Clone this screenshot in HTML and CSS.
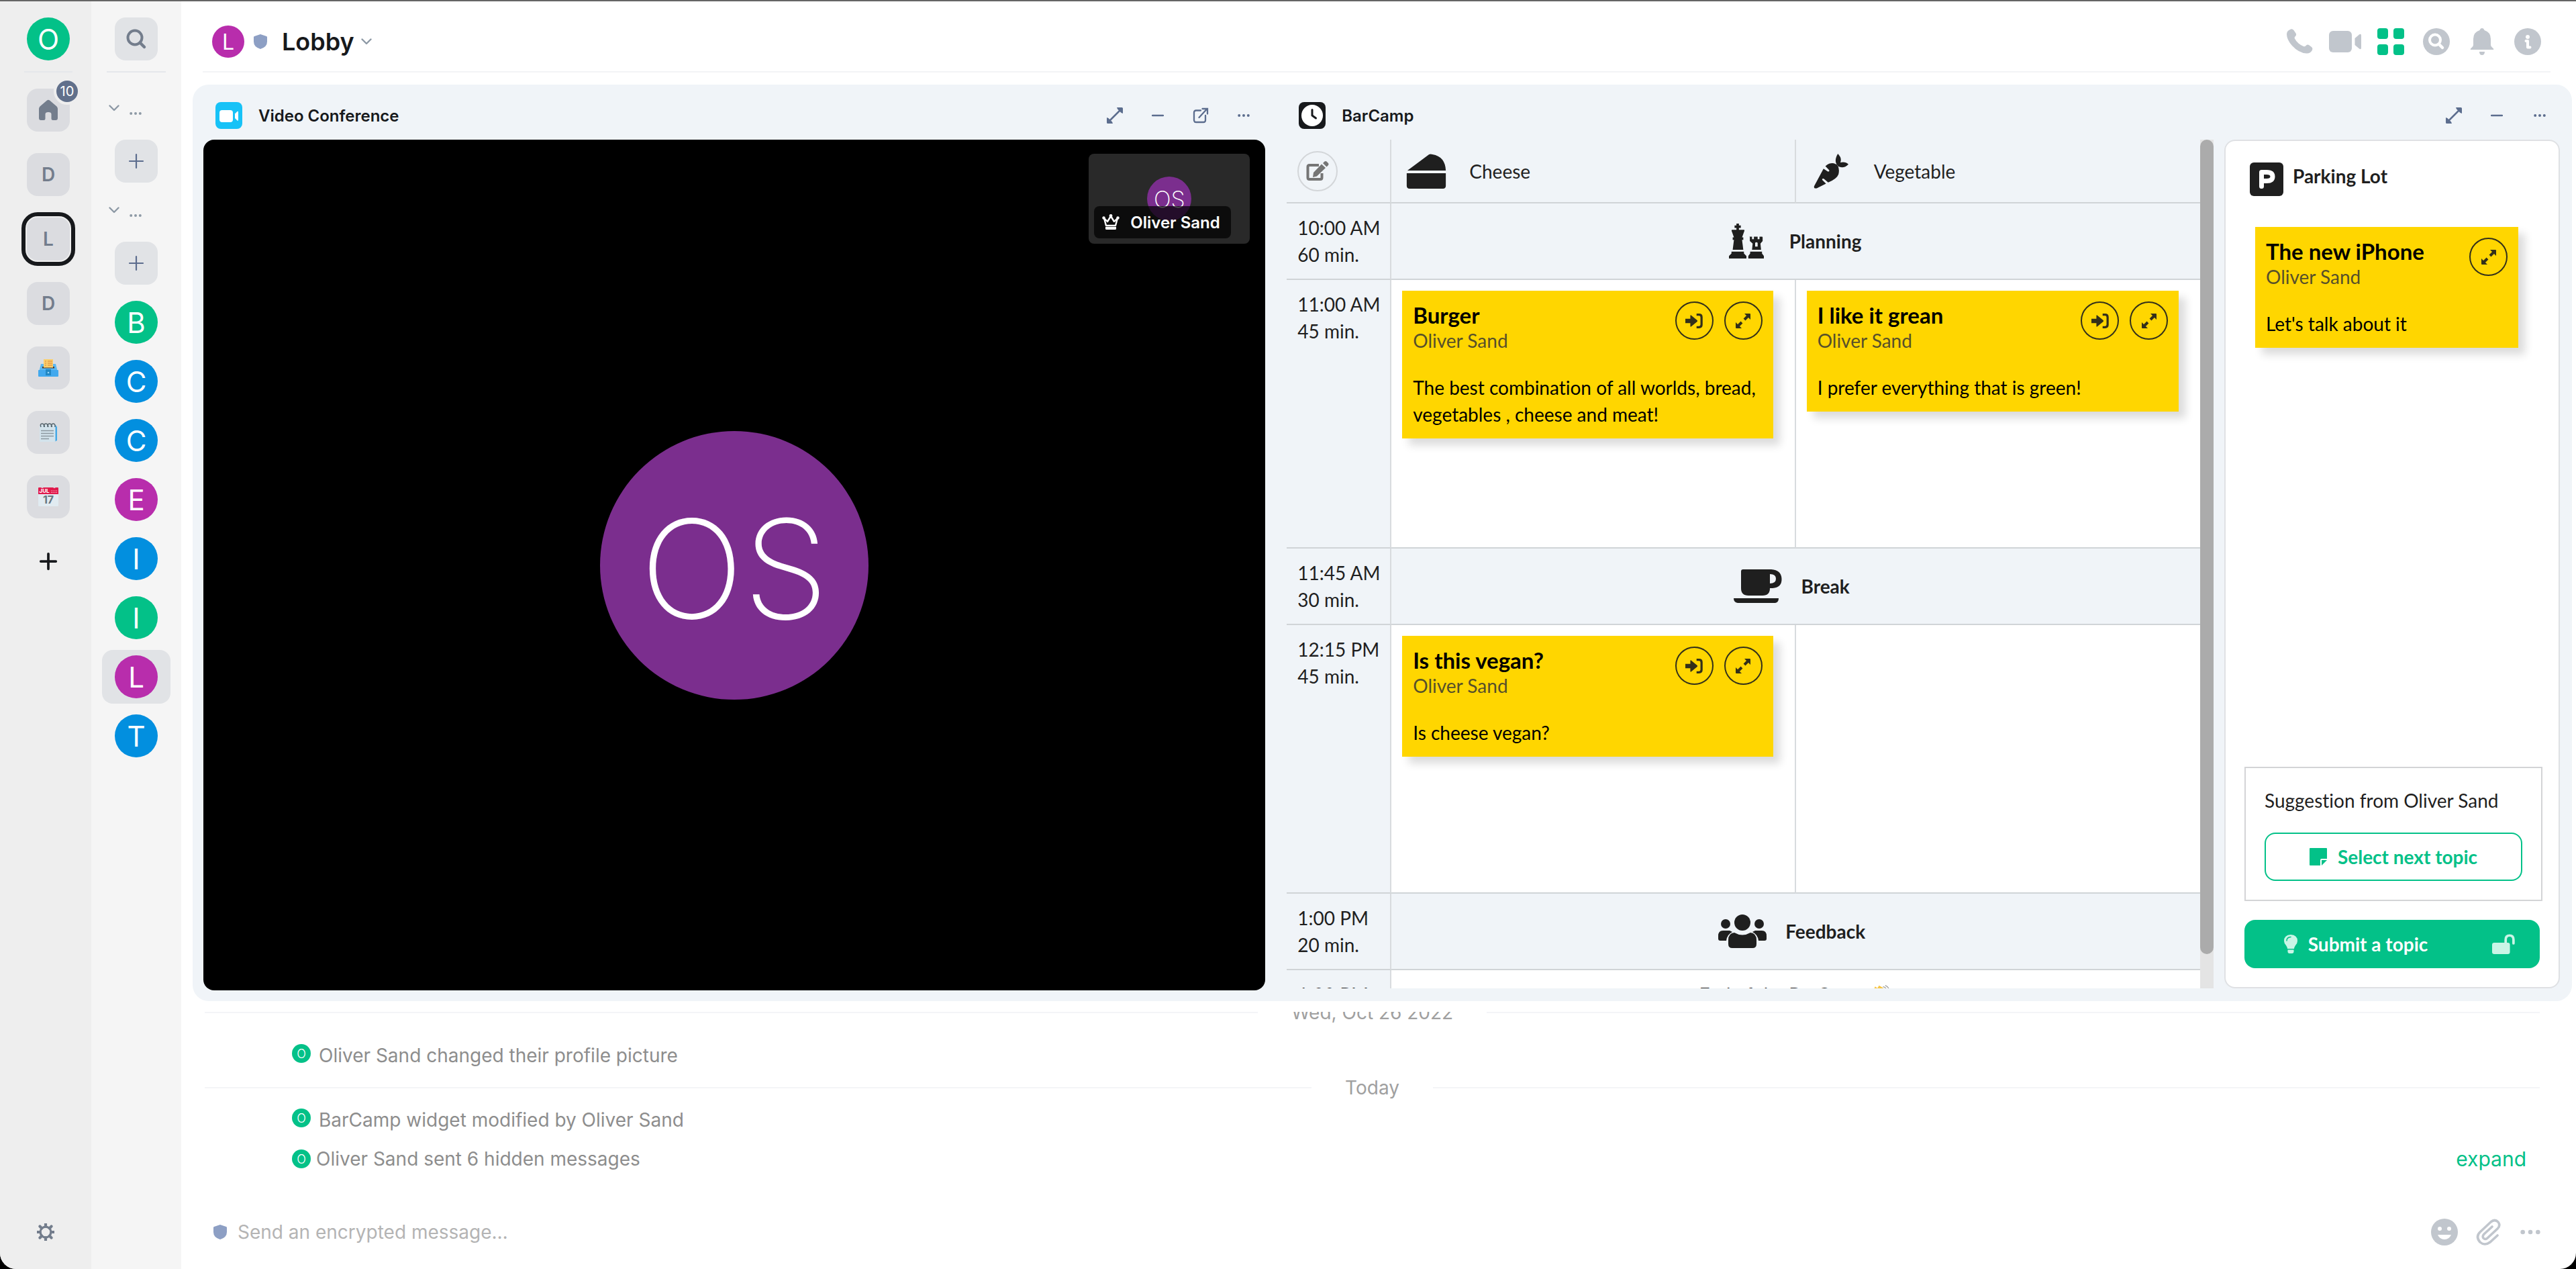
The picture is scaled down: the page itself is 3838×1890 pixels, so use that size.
FILE: index.html
```html
<!DOCTYPE html>
<html lang="en">
<head>
    <meta charset="UTF-8">
    <meta name="viewport" content="width=device-width, initial-scale=1.0">
    <title>Lobby</title>
    <link rel="stylesheet" href="styles.css">
</head>
<body>

<!-- icon sprite -->
<svg class="sprite" aria-hidden="true">
    <symbol id="i-search" viewBox="0 0 32 32"><circle cx="14" cy="14" r="10.5" fill="none" stroke="currentColor" stroke-width="4"/><path d="M21.5 21.5l6.5 6.5" stroke="currentColor" stroke-width="4.5" stroke-linecap="round"/></symbol>
    <symbol id="i-home" viewBox="0 0 32 32"><path d="M14 1.500q2-1.500 4 0L28.500 10.500q1.500 1.500 1.500 3.500V28q0 3-3 3h-4q-2.500 0-2.500-2.500V22q0-3-4.500-3t-4.500 3v6.500Q11.500 31 9 31H5q-3 0-3-3V14q0-2 1.500-3.500z" fill="currentColor"/></symbol>
    <symbol id="i-plus" viewBox="0 0 24 24"><path d="M12 2v20M2 12h20" stroke="currentColor" stroke-width="2.200" stroke-linecap="round"/></symbol>
    <symbol id="i-plus-bold" viewBox="0 0 24 24"><path d="M12 3v18M3 12h18" stroke="currentColor" stroke-width="3" stroke-linecap="round"/></symbol>
    <symbol id="i-chevron" viewBox="0 0 16 10"><path d="M1.500 1.500L8 8l6.500-6.500" fill="none" stroke="currentColor" stroke-width="2.400" stroke-linecap="round" stroke-linejoin="round"/></symbol>
    <symbol id="i-dots" viewBox="0 0 18 6"><circle cx="2.200" cy="3" r="2" fill="currentColor"/><circle cx="9" cy="3" r="2" fill="currentColor"/><circle cx="15.800" cy="3" r="2" fill="currentColor"/></symbol>
    <symbol id="i-gear" viewBox="0 0 28 28"><circle cx="14" cy="14" r="8.500" fill="none" stroke="currentColor" stroke-width="3.500"/><path d="M14 1v4M14 23v4M1 14h4M23 14h4M4.800 4.800l2.900 2.900M20.300 20.300l2.900 2.900M4.800 23.200l2.900-2.900M20.300 7.700l2.900-2.900" stroke="currentColor" stroke-width="4.500" stroke-linecap="round"/></symbol>
    <symbol id="i-shield" viewBox="0 0 20 22"><path d="M10 0l9 3q1 .3 1 1.500v6.500q0 8-10 11Q0 19 0 11V4.500Q0 3.300 1 3z" fill="currentColor"/></symbol>
    <symbol id="i-ballot" viewBox="0 0 30 30"><path d="M4 9h22l3 12H1z" fill="#5cb8f2"/><path d="M6 13h18v2.500H6z" fill="#4a3b30"/><path d="M8 2h14v12.500H8z" fill="#fbcf6b"/><path d="M10 5h2M14 5h7M10 8h2M14 8h7M10 11h2M14 11h7" stroke="#e0803a" stroke-width="1.200"/><rect x="0" y="18" width="30" height="10" rx="1" fill="#42a9ee"/><rect x="11" y="17" width="8" height="9" fill="#2288c4"/><circle cx="15" cy="22" r="1.300" fill="#9bd6f7"/></symbol>
    <symbol id="i-notes" viewBox="0 0 30 30"><path d="M6 4h20l2 3v20l-4 2H6z" fill="#45a9e6"/><rect x="2" y="4" width="23.500" height="25" rx="1" fill="#d3e3ec"/><path d="M4 12.500h19M4 16.500h19M4 20.500h19M4 24.500h12" stroke="#8b979e" stroke-width="1.300"/><path d="M4 7q-2-5 2-5 3 0 2.500 5M9.500 7q-2-5 2-5 3 0 2.500 5M15 7q-2-5 2-5 3 0 2.500 5M20.500 7q-2-5 2-5 3 0 2.500 5" fill="none" stroke="#52626b" stroke-width="1.500"/></symbol>
    <symbol id="i-calendar" viewBox="0 0 30 30"><rect x="0" y="1" width="30" height="28" rx="1.500" fill="#e1ebf1"/><path d="M0 11V2q0-1 1-1h3l2 1 2-1h14l2 1 2-1h3q1 0 1 1v9z" fill="#e01a4c"/><text x="1.500" y="9" class="cal-month">JUL</text><path d="M19 6h9M19 8.500h9" stroke="#f7a5b8" stroke-dasharray="1.500 1"/><text x="15" y="25" class="cal-day">17</text></symbol>

    <symbol id="i-phone" viewBox="0 0 40 40"><path d="M6 2q3-2 5.500 1l3 4.500q1.500 2.500-.5 4.500-2 1.500-1 3.500 2 4 5.500 7t7.500 4.500q2 .8 3.500-1 2-2.500 4.500-1l4 3q2.500 2 .5 5.500-3 4.500-8 4Q19 37 9 26 1 17 1 9q0-5 5-7z" fill="currentColor"/></symbol>
    <symbol id="i-video" viewBox="0 0 48 32"><rect width="34" height="32" rx="6" fill="currentColor"/><path d="M38.500 11l6.500-5.500q3-2 3 1.500v18q0 3.500-3 1.500L38.500 21z" fill="currentColor"/></symbol>
    <symbol id="i-grid" viewBox="0 0 40 40"><g fill="currentColor"><rect width="16" height="16" rx="4"/><rect x="24" width="16" height="16" rx="4"/><rect y="24" width="16" height="16" rx="4"/><rect x="24" y="24" width="16" height="16" rx="4"/></g></symbol>
    <symbol id="i-find" viewBox="0 0 40 40"><circle cx="20" cy="20" r="20" fill="currentColor"/><circle cx="18" cy="17.500" r="8" fill="none" stroke="#fff" stroke-width="4"/><path d="M24 24l5 5" stroke="#fff" stroke-width="4.500" stroke-linecap="round"/></symbol>
    <symbol id="i-bell" viewBox="0 0 40 40"><path d="M20 0q2.500 0 3.500 3Q33 6 33 16v9q0 2 2.500 4t1.500 3H3q-1-1 1.500-3T7 25v-9Q7 6 16.500 3 17.500 0 20 0zM16 35h8q0 5-4 5t-4-5z" fill="currentColor"/></symbol>
    <symbol id="i-info" viewBox="0 0 40 40"><circle cx="20" cy="20" r="20" fill="currentColor"/><circle cx="20" cy="13" r="3" fill="#fff"/><path d="M17.500 19H20v9.500h3.500" fill="none" stroke="#fff" stroke-width="4" stroke-linecap="round" stroke-linejoin="round"/></symbol>

    <symbol id="i-expand" viewBox="0 0 24 24"><path d="M4 20L20 4" stroke="currentColor" stroke-width="2.500"/><path d="M15 0h7.500Q24 0 24 1.500V9l-2.500-1L16 2.500zM9 24H1.500Q0 24 0 22.500V15l2.500 1L8 21.500z" fill="currentColor"/></symbol>
    <symbol id="i-minus" viewBox="0 0 18 4"><path d="M1 2h16" stroke="currentColor" stroke-width="2.400" stroke-linecap="round"/></symbol>
    <symbol id="i-popout" viewBox="0 0 24 24"><path d="M12 4.500H5Q2 4.500 2 7.500V19q0 3 3 3h11q3 0 3-3v-7M9.500 15L21 2.500M14.500 2H22v7.500" fill="none" stroke="currentColor" stroke-width="2.300" stroke-linecap="round"/></symbol>
    <symbol id="i-camera" viewBox="0 0 40 40"><rect width="40" height="40" rx="8" fill="#17c2f7"/><rect x="6" y="12" width="20" height="18" rx="4" fill="#fff"/><path d="M29 17.500l3.500-3.500q1.500-1 1.500 1v11.500q0 2-1.500 1L29 24z" fill="#fff"/></symbol>
    <symbol id="i-clock" viewBox="0 0 40 40"><rect width="40" height="40" rx="8" fill="#17191c"/><circle cx="20" cy="20" r="16" fill="#fff"/><path d="M20 11.500V20l5.500 4" fill="none" stroke="#17191c" stroke-width="3" stroke-linecap="round" stroke-linejoin="round"/></symbol>
    <symbol id="i-crown" viewBox="0 0 26 24"><path d="M3 6l3 11h14l3-11-5 5-5-8-5 8z" fill="none" stroke="currentColor" stroke-width="2.400" stroke-linejoin="round"/><path d="M5 19h16v2.500q0 1.500-1.500 1.500h-13Q5 23 5 21.500z" fill="currentColor"/><circle cx="13" cy="2.400" r="2.400" fill="currentColor"/><circle cx="2.500" cy="5.500" r="2.200" fill="currentColor"/><circle cx="23.500" cy="5.500" r="2.200" fill="currentColor"/></symbol>

    <symbol id="i-edit" viewBox="0 0 34 30"><path d="M19 6H5Q2.500 6 2.500 8.500v16Q2.500 27 5 27h16q2.500 0 2.500-2.500V18" fill="none" stroke="currentColor" stroke-width="4"/><path d="M23 4.500l6 5.500-13 12.500-6 1.500 1-7zM25 3l2.500-2.500q1.500-1 3 0L33 3q1 1.500 0 3l-2.500 2.500z" fill="currentColor"/></symbol>
    <symbol id="i-cheese" viewBox="0 0 56 50"><path d="M32 1Q34 0 37 1q18 3 19 23H1z" fill="currentColor"/><path d="M0 28h56v18q0 4-4 4H4q-4 0-4-4z" fill="currentColor"/></symbol>
    <symbol id="i-carrot" viewBox="0 0 56 56"><path d="M39 19q-6-6-14-3-3 1-6 4l6 6q1 3-2 2.500L16 24 1 52q-1 4 4 3.500L20 48l-6-6q-.5-3 2.500-2l7 6q14-6 16.500-13 2-8-1-14zM37 17q-4-7 2-17 7 7 4 14 8-2 13 3-8 8-17 3z" fill="currentColor"/></symbol>
    <symbol id="i-chess" viewBox="0 0 56 56"><path d="M12 0h4v3h3v4h-3v3h8q1 0 .8 1.500L21 22h2v4h-2l2 16H6l2-16H6v-4h2L4.200 11.500Q4 10 5 10h7V7H9V3h3zM4 45h20v3l4 4v4H0v-4l4-4zM33 21h4v4h3v-4h6v4h3v-4h4q1 0 1 1v6l-3.500 4 1 10H37l1-10-4.500-4v-6q-.5-1-.5-1zM42 31v6h4v-6q-2-2-4 0zM34 45h19v3l3 4v4H31v-4l3-4z" fill="currentColor" fill-rule="evenodd"/></symbol>
    <symbol id="i-cup" viewBox="0 0 72 50"><path d="M14 0h42q15 1 15.500 14T58 28h-4q0 11-11 11H22q-11 0-11-11V3q0-3 3-3zm40 7v14q9 0 9-7t-9-7zM0 43h67q0 6-5 7H6q-6-1-6-7z" fill="currentColor" fill-rule="evenodd"/></symbol>
    <symbol id="i-people" viewBox="0 0 72 50"><g fill="currentColor"><circle cx="36" cy="12" r="12"/><circle cx="11" cy="14" r="7"/><circle cx="61" cy="14" r="7"/><path d="M24 27q12 7 24 0 9 1 9 11v6q0 6-6 6H21q-6 0-6-6v-6q0-10 9-11zM7 24h10l4 2q-8 4-9 13H3q-3 0-3-3v-4q0-8 7-8zM65 24H55l-4 2q8 4 9 13h9q3 0 3-3v-4q0-8-7-8z"/></g></symbol>
    <symbol id="i-wave" viewBox="0 0 36 36"><path d="M4 10l3-6 4 3 3-5 5 3 3 2 9 16-8 10H13L3 20z" fill="#f7c544"/><path d="M21 4q6 2 8 8M25 2q5 2 7 7" fill="none" stroke="#9a9a9a" stroke-width="1.500"/></symbol>
    <symbol id="i-enter" viewBox="0 0 28 24"><path d="M0 8.500h8V4q0-2 1.500-1L19 11q1 1 0 2l-9.500 8Q8 22 8 20v-4.500H0z" fill="currentColor"/><path d="M18 2h4q4 0 4 4v12q0 4-4 4h-4" fill="none" stroke="currentColor" stroke-width="3.500"/></symbol>
    <symbol id="i-resize" viewBox="0 0 24 24"><path d="M3.500 20.500L10 14M14 10l6.500-6.500" stroke="currentColor" stroke-width="4"/><path d="M14 1h8q1 0 1 1v8zM10 23H2q-1 0-1-1v-8z" fill="currentColor"/></symbol>
    <symbol id="i-parking" viewBox="0 0 50 50"><rect width="50" height="50" rx="6" fill="currentColor"/><path d="M17.500 35.500v-21H25q9 0 9 6.500t-9 6.500h-7" fill="none" stroke="#fff" stroke-width="7" stroke-linejoin="round" stroke-linecap="round"/></symbol>
    <symbol id="i-note" viewBox="0 0 26 26"><path d="M1 0h24q1 0 1 1v15h-8q-2 0-2 2v8H1q-1 0-1-1V1q0-1 1-1zM18 18h8l-8 8z" fill="currentColor"/></symbol>
    <symbol id="i-bulb" viewBox="0 0 20 28"><path d="M10 0q10 .5 10 9.500 0 3.500-3 6.500-2 3-2 5H5q0-2-2-5-3-3-3-6.500Q0 .5 10 0zM5.500 22.500h9V26q-.5 2-2.500 2H8q-2 0-2.500-2z" fill="currentColor"/><path d="M4 9q0-5 6-5.500" fill="none" stroke="#03c188" stroke-width="1.500" stroke-linecap="round"/></symbol>
    <symbol id="i-unlock" viewBox="0 0 32 28"><rect y="12" width="25" height="16" rx="3" fill="currentColor"/><path d="M19 13V8q0-6 5.500-6T30 8v5" fill="none" stroke="currentColor" stroke-width="3.500" stroke-linecap="round"/></symbol>
    <symbol id="i-smile" viewBox="0 0 40 40"><circle cx="20" cy="20" r="20" fill="currentColor"/><circle cx="13" cy="15" r="3" fill="#fff"/><circle cx="27" cy="15" r="3" fill="#fff"/><path d="M10 24h20q-3 7-10 7t-10-7z" fill="#fff"/></symbol>
    <symbol id="i-clip" viewBox="0 0 38 40"><path d="M32 25L21 35q-8 6-15 0-7-8 0-15L22 5q6-5 11 0 4 5-1 10L17 29q-3 3-6 0-2-3 1-6l12-11" fill="none" stroke="currentColor" stroke-width="3.600" stroke-linecap="round"/></symbol>
</svg>

<div class="app">

    <nav class="spaces" aria-label="Spaces">
        <button class="avatar avatar-lg green" type="button">O</button>
        <hr class="nav-line">
        <div class="space-list">
            <button class="tile" type="button" aria-label="Home"><svg class="icon-32"><use href="#i-home"/></svg><span class="badge">10</span></button>
            <button class="tile" type="button">D</button>
            <button class="tile tile-active" type="button">L</button>
            <button class="tile" type="button">D</button>
            <button class="tile" type="button" aria-label="Ballot"><svg class="icon-30"><use href="#i-ballot"/></svg></button>
            <button class="tile" type="button" aria-label="Notes"><svg class="icon-30"><use href="#i-notes"/></svg></button>
            <button class="tile" type="button" aria-label="Calendar"><svg class="icon-30"><use href="#i-calendar"/></svg></button>
            <button class="tile tile-plain" type="button" aria-label="Add space"><svg class="icon-30"><use href="#i-plus-bold"/></svg></button>
        </div>
        <button class="settings" type="button" aria-label="Settings"><svg class="icon-26"><use href="#i-gear"/></svg></button>
    </nav>

    <aside class="rooms" aria-label="Rooms">
        <button class="tile tile-light" type="button" aria-label="Search"><svg class="icon-32"><use href="#i-search"/></svg></button>
        <hr class="nav-line">
        <div class="sublist sublist-first"><svg class="chevron"><use href="#i-chevron"/></svg><svg class="sub-dots"><use href="#i-dots"/></svg></div>
        <button class="tile tile-light slate" type="button" aria-label="Start chat"><svg class="icon-24"><use href="#i-plus"/></svg></button>
        <div class="sublist"><svg class="chevron"><use href="#i-chevron"/></svg><svg class="sub-dots"><use href="#i-dots"/></svg></div>
        <button class="tile tile-light slate" type="button" aria-label="Add room"><svg class="icon-24"><use href="#i-plus"/></svg></button>
        <div class="room-list">
            <a class="room" href="#"><span class="avatar avatar-lg green">B</span></a>
            <a class="room" href="#"><span class="avatar avatar-lg blue">C</span></a>
            <a class="room" href="#"><span class="avatar avatar-lg blue">C</span></a>
            <a class="room" href="#"><span class="avatar avatar-lg purple">E</span></a>
            <a class="room" href="#"><span class="avatar avatar-lg blue">I</span></a>
            <a class="room" href="#"><span class="avatar avatar-lg green">I</span></a>
            <a class="room room-active" href="#"><span class="avatar avatar-lg purple">L</span></a>
            <a class="room" href="#"><span class="avatar avatar-lg blue">T</span></a>
        </div>
    </aside>

    <main class="main">
        <header class="room-header">
            <span class="avatar avatar-md purple">L</span>
            <svg class="shield"><use href="#i-shield"/></svg>
            <h1>Lobby</h1>
            <svg class="chevron"><use href="#i-chevron"/></svg>
            <div class="header-actions">
                <button type="button" aria-label="Voice call"><svg class="icon-40"><use href="#i-phone"/></svg></button>
                <button type="button" aria-label="Video call"><svg class="icon-video"><use href="#i-video"/></svg></button>
                <button class="on" type="button" aria-label="Widgets"><svg class="icon-40"><use href="#i-grid"/></svg></button>
                <button type="button" aria-label="Search"><svg class="icon-40"><use href="#i-find"/></svg></button>
                <button type="button" aria-label="Notifications"><svg class="icon-40"><use href="#i-bell"/></svg></button>
                <button type="button" aria-label="Room info"><svg class="icon-40"><use href="#i-info"/></svg></button>
            </div>
        </header>

        <section class="widgets">
            <article class="widget">
                <header class="widget-header">
                    <svg class="icon-40"><use href="#i-camera"/></svg>
                    <h2>Video Conference</h2>
                    <button type="button" aria-label="Maximise"><svg class="icon-24"><use href="#i-expand"/></svg></button>
                    <button type="button" aria-label="Minimise"><svg class="icon-minus"><use href="#i-minus"/></svg></button>
                    <button type="button" aria-label="Pop out"><svg class="icon-24"><use href="#i-popout"/></svg></button>
                    <button type="button" aria-label="Options"><svg class="sub-dots"><use href="#i-dots"/></svg></button>
                </header>
                <div class="video">
                    <div class="speaker">OS</div>
                    <div class="thumb">
                        <div class="thumb-avatar">OS</div>
                        <div class="thumb-label"><svg class="icon-26"><use href="#i-crown"/></svg>Oliver Sand</div>
                    </div>
                </div>
            </article>

            <article class="widget">
                <header class="widget-header">
                    <svg class="icon-40"><use href="#i-clock"/></svg>
                    <h2>BarCamp</h2>
                    <button type="button" aria-label="Maximise"><svg class="icon-24"><use href="#i-expand"/></svg></button>
                    <button type="button" aria-label="Minimise"><svg class="icon-minus"><use href="#i-minus"/></svg></button>
                    <button type="button" aria-label="Options"><svg class="sub-dots"><use href="#i-dots"/></svg></button>
                </header>
                <div class="barcamp">
                    <div class="schedule">
                        <table>
                            <thead>
                                <tr>
                                    <th class="time-col"><button class="edit" type="button" aria-label="Edit"><svg class="icon-34"><use href="#i-edit"/></svg></button></th>
                                    <th><div class="track"><svg class="track-icon"><use href="#i-cheese"/></svg>Cheese</div></th>
                                    <th><div class="track"><svg class="track-icon"><use href="#i-carrot"/></svg>Vegetable</div></th>
                                </tr>
                            </thead>
                            <tbody>
                                <tr class="band">
                                    <th>10:00 AM<br>60 min.</th>
                                    <td colspan="2"><div class="band-title"><svg class="track-icon"><use href="#i-chess"/></svg>Planning</div></td>
                                </tr>
                                <tr class="slot">
                                    <th>11:00 AM<br>45 min.</th>
                                    <td>
                                        <div class="card">
                                            <div class="card-head">
                                                <h3>Burger</h3>
                                                <button type="button" aria-label="Move"><svg class="icon-26"><use href="#i-enter"/></svg></button>
                                                <button type="button" aria-label="Open"><svg class="icon-24"><use href="#i-resize"/></svg></button>
                                            </div>
                                            <div class="author">Oliver Sand</div>
                                            <p>The best combination of all worlds, bread, vegetables , cheese and meat!</p>
                                        </div>
                                    </td>
                                    <td>
                                        <div class="card">
                                            <div class="card-head">
                                                <h3>I like it grean</h3>
                                                <button type="button" aria-label="Move"><svg class="icon-26"><use href="#i-enter"/></svg></button>
                                                <button type="button" aria-label="Open"><svg class="icon-24"><use href="#i-resize"/></svg></button>
                                            </div>
                                            <div class="author">Oliver Sand</div>
                                            <p>I prefer everything that is green!</p>
                                        </div>
                                    </td>
                                </tr>
                                <tr class="band">
                                    <th>11:45 AM<br>30 min.</th>
                                    <td colspan="2"><div class="band-title"><svg class="track-icon"><use href="#i-cup"/></svg>Break</div></td>
                                </tr>
                                <tr class="slot">
                                    <th>12:15 PM<br>45 min.</th>
                                    <td>
                                        <div class="card">
                                            <div class="card-head">
                                                <h3>Is this vegan?</h3>
                                                <button type="button" aria-label="Move"><svg class="icon-26"><use href="#i-enter"/></svg></button>
                                                <button type="button" aria-label="Open"><svg class="icon-24"><use href="#i-resize"/></svg></button>
                                            </div>
                                            <div class="author">Oliver Sand</div>
                                            <p>Is cheese vegan?</p>
                                        </div>
                                    </td>
                                    <td></td>
                                </tr>
                                <tr class="band">
                                    <th>1:00 PM<br>20 min.</th>
                                    <td colspan="2"><div class="band-title"><svg class="track-icon"><use href="#i-people"/></svg>Feedback</div></td>
                                </tr>
                                <tr class="closing">
                                    <th>1:20 PM</th>
                                    <td colspan="2">End of the BarCamp <svg class="icon-34"><use href="#i-wave"/></svg></td>
                                </tr>
                            </tbody>
                        </table>
                    </div>
                    <div class="scrollbar"><div class="scrollbar-thumb"></div></div>
                    <div class="parking">
                        <h3 class="parking-title"><svg class="icon-50"><use href="#i-parking"/></svg>Parking Lot</h3>
                        <div class="parking-list">
                            <div class="card">
                                <div class="card-head">
                                    <h3>The new iPhone</h3>
                                    <button type="button" aria-label="Open"><svg class="icon-24"><use href="#i-resize"/></svg></button>
                                </div>
                                <div class="author">Oliver Sand</div>
                                <p>Let's talk about it</p>
                            </div>
                        </div>
                        <div class="suggestion">
                            <p>Suggestion from Oliver Sand</p>
                            <button class="btn btn-outline" type="button"><svg class="icon-26"><use href="#i-note"/></svg>Select next topic</button>
                        </div>
                        <div class="submit-row">
                            <button class="btn btn-submit" type="button"><svg class="icon-bulb"><use href="#i-bulb"/></svg>Submit a topic</button>
                            <button class="btn btn-lock" type="button" aria-label="Lock topics"><svg class="icon-34"><use href="#i-unlock"/></svg></button>
                        </div>
                    </div>
                </div>
            </article>
        </section>

        <section class="timeline">
            <div class="date">Wed, Oct 26 2022</div>
            <div class="event event-gap"><span class="avatar avatar-sm green">O</span>Oliver Sand changed their profile picture</div>
            <div class="date">Today</div>
            <div class="event"><span class="avatar avatar-sm green">O</span>BarCamp widget modified by Oliver Sand</div>
            <div class="event summary"><span class="avatar avatar-sm green">O</span>Oliver Sand sent 6 hidden messages<button class="expand" type="button">expand</button></div>
        </section>

        <form class="composer">
            <svg class="shield"><use href="#i-shield"/></svg>
            <input type="text" placeholder="Send an encrypted message…" aria-label="Send an encrypted message">
            <button type="button" aria-label="Emoji"><svg class="icon-40"><use href="#i-smile"/></svg></button>
            <button type="button" aria-label="Attachment"><svg class="icon-40"><use href="#i-clip"/></svg></button>
            <button type="button" aria-label="More options"><svg class="more-dots"><use href="#i-dots"/></svg></button>
        </form>
    </main>

</div>

</body>
</html>
```
FILE: styles.css
```css
* {
    box-sizing: border-box;
}
html {
    background: #000;
}
body {
    margin: 0;
    font-family: Inter, "Liberation Sans", sans-serif;
    font-size: 28px;
    color: #17191c;
}
h1, h2, h3, p {
    margin: 0;
}
button {
    padding: 0;
    border: none;
    background: none;
    font: inherit;
    color: inherit;
    cursor: pointer;
}
svg {
    display: block;
    flex: none;
}
.sprite {
    position: absolute;
    width: 0;
    height: 0;
}
.cal-month {
    font: bold 8px Inter, sans-serif;
    fill: #fff;
}
.cal-day {
    font: bold 16px Inter, sans-serif;
    fill: #66757f;
    text-anchor: middle;
}

/* icon sizes */
.icon-24 { width: 24px; height: 24px; }
.icon-26 { width: 26px; height: 26px; }
.icon-30 { width: 30px; height: 30px; }
.icon-32 { width: 32px; height: 32px; }
.icon-34 { width: 34px; height: 30px; }
.icon-40 { width: 40px; height: 40px; }
.icon-50 { width: 50px; height: 50px; }
.icon-minus { width: 18px; height: 4px; }
.icon-video { width: 48px; height: 32px; }
.icon-bulb { width: 20px; height: 28px; }
.sub-dots { width: 18px; height: 6px; }
.more-dots { width: 32px; height: 10px; }
.chevron { width: 16px; height: 10px; color: #8d99a5; }
.shield { width: 20px; height: 22px; color: #8d9fc4; }

.app {
    display: flex;
    height: 100vh;
    border-top: 2px solid #666;
    border-radius: 0 0 24px 24px;
    overflow: hidden;
    background: #fff;
}

/* avatars */
.avatar {
    display: flex;
    flex: none;
    align-items: center;
    justify-content: center;
    border-radius: 50%;
    color: #fff;
}
.avatar-lg {
    width: 64px;
    height: 64px;
    font-size: 42px;
}
.avatar-md {
    width: 48px;
    height: 48px;
    font-size: 32px;
}
.avatar-sm {
    width: 28px;
    height: 28px;
    font-size: 18px;
    font-weight: 300;
}
.green { background: #03c188; }
.blue { background: #028fdf; }
.purple { background: #b82dac; }

/* left columns */
.spaces, .rooms {
    display: flex;
    flex: none;
    flex-direction: column;
    align-items: center;
    padding-top: 24px;
}
.spaces {
    width: 136px;
    padding-left: 8px;
    background: #eeeeee;
}
.rooms {
    width: 134px;
    background: #f5f5f5;
}
.nav-line {
    width: 88px;
    height: 2px;
    margin: 16px 0 0;
    border: none;
    background: #e5e7eb;
}
.spaces .nav-line {
    width: 72px;
}
.space-list {
    display: flex;
    flex-direction: column;
    gap: 32px;
    margin-top: 24px;
}
.tile {
    position: relative;
    display: flex;
    align-items: center;
    justify-content: center;
    width: 64px;
    height: 64px;
    border-radius: 16px;
    background: #dbdce0;
    color: #737d8c;
    font-weight: 600;
}
.tile-light {
    background: #e1e3e6;
}
.tile-plain {
    background: none;
    color: #17191c;
}
.slate {
    color: #5c6d8e;
}
.tile-active {
    outline: 6px solid #17191c;
    outline-offset: 2px;
}
.badge {
    position: absolute;
    top: -16px;
    right: -16px;
    width: 40px;
    height: 40px;
    border: 4px solid #eeeeee;
    border-radius: 50%;
    background: #61708b;
    color: #fff;
    font-size: 20px;
    font-weight: 400;
    line-height: 32px;
}
.settings {
    margin: auto 8px 42px 0;
    color: #737d8c;
}
.sublist {
    display: flex;
    gap: 15px;
    width: 100%;
    height: 32px;
    margin: 28px 0;
    padding: 8px 0 0 26px;
    color: #8d99a5;
}
.sublist-first {
    margin-top: 40px;
}
.sublist .sub-dots {
    margin-top: 10px;
}
.room-list {
    display: flex;
    flex-direction: column;
    gap: 8px;
    width: 100%;
    padding: 16px;
}
.room {
    display: flex;
    justify-content: center;
    padding: 8px;
    border-radius: 16px;
    text-decoration: none;
}
.room-active {
    background: #e1e3e6;
}

/* room header */
.main {
    display: flex;
    flex: 1;
    flex-direction: column;
    min-width: 0;
}
.room-header {
    display: flex;
    flex: none;
    align-items: center;
    height: 106px;
    margin: 0 38px 18px 32px;
    padding: 16px 14px 0;
    border-bottom: 2px solid #f3f4f6;
}
.room-header .shield {
    margin: 0 22px 0 14px;
}
.room-header h1 {
    margin-right: 10px;
    font-size: 36px;
    font-weight: 600;
}
.header-actions {
    display: flex;
    gap: 28px;
    margin-left: auto;
    color: #c1c6cd;
}
.header-actions button {
    display: flex;
    align-items: center;
    justify-content: center;
    width: 40px;
    height: 40px;
}
.header-actions .on {
    color: #03c188;
}

/* widgets */
.widgets {
    display: grid;
    flex: 5 1 0;
    grid-template-rows: minmax(0, 1fr);
    grid-template-columns: 5fr 6fr;
    gap: 32px;
    min-height: 0;
    margin: 0 6px 0 17px;
    padding: 0 16px;
    border-radius: 24px;
    background: #f0f4f8;
}
.widget {
    display: flex;
    flex-direction: column;
    min-width: 0;
    padding: 10px 0 16px;
}
.widget-header {
    display: flex;
    flex: none;
    align-items: center;
    height: 72px;
    padding-left: 18px;
}
.widget-header h2 {
    flex: 1;
    margin-left: 24px;
    font-size: 24px;
    font-weight: 600;
}
.widget-header button {
    display: flex;
    align-items: center;
    justify-content: center;
    width: 64px;
    height: 64px;
    color: #5c6d8e;
}
.video {
    position: relative;
    display: flex;
    flex: 1;
    align-items: center;
    justify-content: center;
    border-radius: 16px;
    background: #000;
}
.speaker {
    width: 400px;
    height: 400px;
    border-radius: 50%;
    background: #7b2e8e;
    color: #fff;
    font-size: 204px;
    font-weight: 200;
    line-height: 410px;
    text-align: center;
}
.thumb {
    position: absolute;
    top: 21px;
    right: 23px;
    display: flex;
    align-items: center;
    justify-content: center;
    width: 240px;
    height: 134px;
    border-radius: 8px;
    background: #292929;
}
.thumb-avatar {
    width: 66px;
    height: 66px;
    border-radius: 50%;
    background: #7b2e8e;
    color: #fff;
    font-size: 34px;
    font-weight: 200;
    line-height: 68px;
    text-align: center;
}
.thumb-label {
    position: absolute;
    bottom: 8px;
    left: 8px;
    display: flex;
    align-items: center;
    gap: 16px;
    height: 48px;
    padding: 0 16px 0 12px;
    border-radius: 8px;
    background: rgba(0, 0, 0, 0.7);
    color: #fff;
    font-size: 24px;
    font-weight: 600;
}

/* barcamp */
.barcamp {
    display: flex;
    flex: 1;
    min-height: 0;
    padding: 0 2px 3px 0;
    font-family: Lato, sans-serif;
    font-variant-ligatures: none;
    line-height: 40px;
    color: #1f1f1f;
}
.schedule {
    flex: 1;
    overflow: hidden;
}
table {
    width: 100%;
    border-spacing: 0;
    table-layout: fixed;
}
th, td {
    padding: 16px;
    border-right: 2px solid #d8dbde;
    border-bottom: 2px solid #d0d4d7;
    font-weight: 400;
    text-align: left;
    vertical-align: top;
}
tbody th {
    padding-right: 0;
    white-space: nowrap;
}
thead th {
    height: 95px;
    padding: 0 16px;
    vertical-align: middle;
}
td:last-child, thead th:last-child {
    border-right: none;
}
.time-col {
    width: 156px;
}
.band th, .band td {
    height: 114px;
}
.band td {
    vertical-align: middle;
}
.slot th, .slot td {
    height: 400px;
}
.slot td {
    padding-right: 32px;
    background: #fff;
}
.closing td {
    height: 114px;
    background: #fff;
    text-align: center;
}
.closing svg {
    display: inline-block;
    vertical-align: -4px;
}
.edit {
    display: flex;
    align-items: center;
    justify-content: center;
    width: 60px;
    height: 60px;
    border: 2px solid #d3d6d9;
    border-radius: 50%;
    color: #757575;
}
.track, .band-title {
    display: flex;
    align-items: center;
    gap: 28px;
}
.band-title {
    justify-content: center;
    padding-right: 12px;
    font-weight: 700;
}
.track-icon {
    width: 72px;
    height: 52px;
}
.card {
    padding: 16px;
    background: #ffd600;
    box-shadow: 10px 10px 12px rgba(0, 0, 0, 0.14);
    color: #000;
}
.card-head {
    display: flex;
    gap: 16px;
    height: 40px;
}
.card-head h3 {
    flex: 1;
    font-size: 33px;
    font-weight: 700;
}
.card-head button {
    display: flex;
    align-items: center;
    justify-content: center;
    width: 57px;
    height: 57px;
    border: 2px solid #33301a;
    border-radius: 50%;
    color: #33301a;
}
.author {
    line-height: 36px;
    color: #57502a;
}
.card p {
    margin-top: 32px;
}
.scrollbar {
    flex: none;
    width: 20px;
    background: #e4e4e4;
}
.scrollbar-thumb {
    height: 96%;
    border-radius: 10px;
    background: #ababab;
}
.parking {
    display: flex;
    flex: none;
    flex-direction: column;
    width: 500px;
    margin-left: 16px;
    padding: 32px 24px 28px 28px;
    border: 2px solid #dfe1e4;
    border-radius: 16px;
    background: #fff;
}
.parking-title {
    display: flex;
    align-items: flex-start;
    gap: 14px;
    padding-left: 8px;
    font-size: 28px;
    font-weight: 700;
}
.parking-list {
    flex: 1;
    margin-top: 30px;
    padding: 16px 36px 16px 16px;
}
.suggestion {
    padding: 28px;
    border: 2px solid #d3d4d6;
}
.btn {
    display: flex;
    align-items: center;
    justify-content: center;
    gap: 16px;
    height: 72px;
    border-radius: 16px;
    font-weight: 700;
}
.btn-outline {
    width: 100%;
    margin-top: 28px;
    border: 2px solid #03c188;
    color: #03c188;
}
.submit-row {
    display: flex;
    margin: 28px 4px 0 0;
    border-radius: 16px;
    background: #03c188;
    color: #fff;
}
.submit-row svg {
    color: #c9f5e6;
}
.btn-submit {
    flex: 1;
}
.btn-lock {
    width: 108px;
}

/* timeline */
.timeline {
    display: flex;
    flex: 1 1 0;
    flex-direction: column;
    justify-content: flex-end;
    min-height: 0;
    margin: 16px 54px 0 35px;
    overflow: hidden;
    color: #8d8d8d;
}
.date {
    display: flex;
    flex: none;
    align-items: center;
    gap: 50px;
    height: 48px;
    color: #a0a0a0;
}
.date::before, .date::after {
    content: "";
    flex: 1;
    height: 2px;
    background: #f4f5f7;
}
.event {
    display: flex;
    flex: none;
    align-items: center;
    gap: 12px;
    height: 48px;
    padding: 0 20px 0 130px;
}
.event-gap {
    margin-top: 16px;
}
.event .avatar {
    margin-bottom: 6px;
}
.summary {
    gap: 8px;
    margin: 10px 0 30px;
}
.summary .avatar {
    margin-bottom: 0;
}
.expand {
    margin-left: auto;
    color: #03c188;
    font-size: 30px;
}

/* composer */
.composer {
    display: flex;
    flex: none;
    align-items: center;
    height: 110px;
    padding: 0 52px 0 48px;
    color: #c1c6cd;
}
.composer input {
    flex: 1;
    margin-left: 14px;
    border: none;
    outline: none;
    background: none;
    font: inherit;
}
.composer input::placeholder {
    color: #b4b4b4;
}
.composer button {
    margin-left: 26px;
}
```
